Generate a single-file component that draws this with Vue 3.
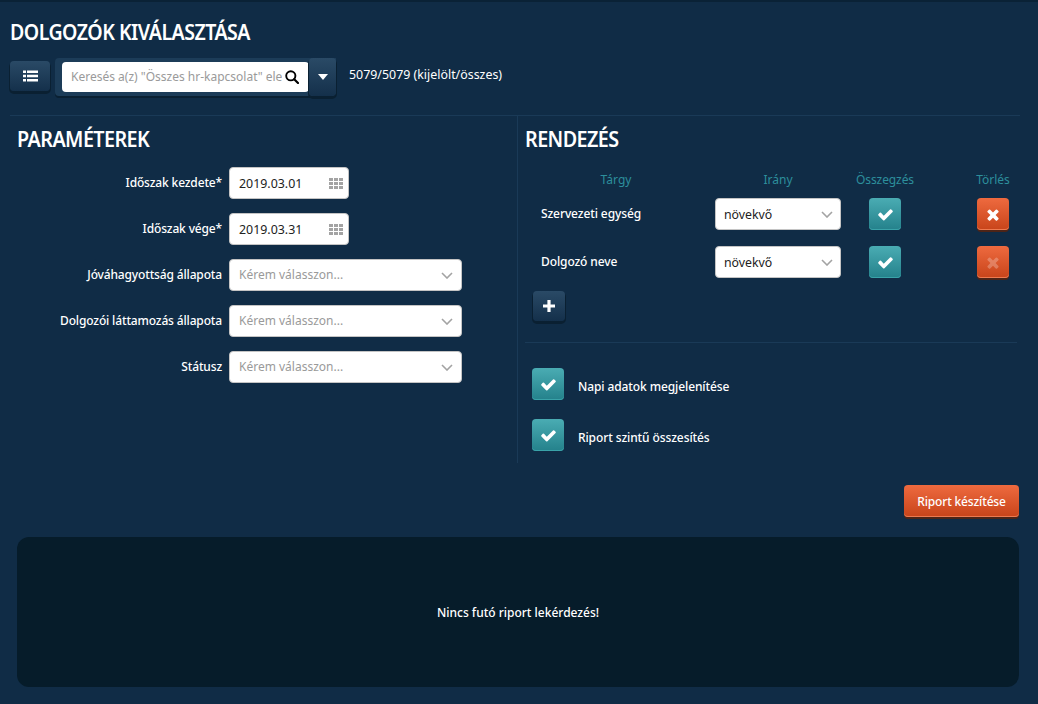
<script setup>
const params = [
  { label: 'Időszak kezdete*', value: '2019.03.01', type: 'date' },
  { label: 'Időszak vége*', value: '2019.03.31', type: 'date' },
  { label: 'Jóváhagyottság állapota', value: 'Kérem válasszon...', type: 'select' },
  { label: 'Dolgozói láttamozás állapota', value: 'Kérem válasszon...', type: 'select' },
  { label: 'Státusz', value: 'Kérem válasszon...', type: 'select' }
]
const sorts = [
  { name: 'Szervezeti egység', faded: false },
  { name: 'Dolgozó neve', faded: true }
]
const options = ['Napi adatok megjelenítése', 'Riport szintű összesítés']
const checkPath = 'M1671 566q0 40-28 68l-724 724-136 136q-28 28-68 28t-68-28l-136-136-362-362q-28-28-28-68t28-68l136-136q28-28 68-28t68 28l294 295 656-657q28-28 68-28t68 28l136 136q28 28 28 68z'
const timesPath = 'M1298 1322q0 40-28 68l-136 136q-28 28-68 28t-68-28l-294-294-294 294q-28 28-68 28t-68-28l-136-136q-28-28-28-68t28-68l294-294-294-294q-28-28-28-68t28-68l136-136q28-28 68-28t68 28l294 294 294-294q28-28 68-28t68 28l136 136q28 28 28 68t-28 68l-294 294 294 294q28 28 28 68z'
</script>

<template>
  <div class="page">
    <h1 class="title">DOLGOZÓK KIVÁLASZTÁSA</h1>
    <div class="toolbar">
      <button class="btn-dark list-btn">
        <svg width="15" height="12" viewBox="0 0 15 12"><path fill="#fff" d="M0 .5h3v2.4H0zM4 .5h11v2.4H4zM0 4.8h3v2.4H0zM4 4.8h11v2.4H4zM0 9.1h3v2.4H0zM4 9.1h11v2.4H4z"/></svg>
      </button>
      <div class="search-group">
        <div class="search-box">
          <span class="search-text">Keresés a(z) "Összes hr-kapcsolat" elemei között</span>
          <svg class="search-icon" width="14" height="14" viewBox="0 0 14 14"><circle cx="5.8" cy="5.8" r="4.6" fill="none" stroke="#000" stroke-width="1.9"/><path d="M9.2 9.2l3.8 3.8" stroke="#000" stroke-width="2.2" stroke-linecap="round"/></svg>
        </div>
        <button class="btn-dark caret-btn">
          <svg width="10" height="6" viewBox="0 0 10 6"><path fill="#fff" d="M0 0h10L5 6z"/></svg>
        </button>
      </div>
      <span class="count">5079/5079 (kijelölt/összes)</span>
    </div>

    <div class="columns">
      <section class="col-left">
        <h2 class="heading">PARAMÉTEREK</h2>
        <div class="form">
          <div v-for="p in params" :key="p.label" class="form-row">
            <label class="form-label">{{ p.label }}</label>
            <div v-if="p.type === 'date'" class="field date">
              <span class="val">{{ p.value }}</span>
              <svg width="14" height="11" viewBox="0 0 14 11"><path fill="#a3a3a3" d="M0 0h4v3H0zM5 0h4v3H5zM10 0h4v3h-4zM0 4h4v3H0zM5 4h4v3H5zM10 4h4v3h-4zM0 8h4v3H0zM5 8h4v3H5zM10 8h4v3h-4z"/></svg>
            </div>
            <div v-else class="field sel">
              <span class="ph">{{ p.value }}</span>
              <svg width="12" height="7" viewBox="0 0 12 7"><path d="M1 1l5 5 5-5" fill="none" stroke="#a3a3a3" stroke-width="1.6"/></svg>
            </div>
          </div>
        </div>
      </section>

      <section class="col-right">
        <h2 class="heading short">RENDEZÉS</h2>
        <div class="sort-head">
          <span class="th">Tárgy</span>
          <span class="th">Irány</span>
          <span class="th">Összegzés</span>
          <span class="th">Törlés</span>
        </div>
        <div class="sort-rows">
          <div v-for="s in sorts" :key="s.name" class="sort-row">
            <span class="sort-name">{{ s.name }}</span>
            <div class="field dir">
              <span class="val">növekvő</span>
              <svg width="12" height="7" viewBox="0 0 12 7"><path d="M1 1l5 5 5-5" fill="none" stroke="#a3a3a3" stroke-width="1.6"/></svg>
            </div>
            <button class="sq teal">
              <svg width="17" height="17" viewBox="0 0 1792 1792"><path fill="#fff" :d="checkPath"/></svg>
            </button>
            <button class="sq orange">
              <svg width="14" height="17" viewBox="0 0 1408 1792" :class="{ faded: s.faded }"><path fill="#fff" :d="timesPath"/></svg>
            </button>
          </div>
        </div>
        <button class="btn-dark plus-btn">
          <svg width="12" height="12" viewBox="0 0 12 12"><path fill="#fff" d="M4.4 0h3.2v4.4H12v3.2H7.6V12H4.4V7.6H0V4.4h4.4z"/></svg>
        </button>
        <div class="divider"></div>
        <div class="options">
          <div v-for="o in options" :key="o" class="option">
            <button class="sq teal">
              <svg width="17" height="17" viewBox="0 0 1792 1792"><path fill="#fff" :d="checkPath"/></svg>
            </button>
            <span class="option-text">{{ o }}</span>
          </div>
        </div>
      </section>
    </div>

    <div class="actions">
      <button class="run-btn">Riport készítése</button>
    </div>
    <div class="result">Nincs futó riport lekérdezés!</div>
  </div>
</template>

<style scoped>
.page {
  box-sizing: border-box;
  width: 1038px;
  height: 704px;
  overflow: hidden;
  background: #102c46;
  border-top: 2px solid #0a2236;
  padding: 0 18px 0 10px;
  color: #fff;
  font-family: "Noto Sans", "Open Sans", sans-serif;
  font-size: 12px;
}
button {
  padding: 0;
  font: inherit;
  color: #fff;
  cursor: pointer;
  display: flex;
  align-items: center;
  justify-content: center;
}
.title {
  margin: 16px 0 0;
  height: 26px;
  line-height: 26px;
  font-size: 22px;
  font-weight: 600;
  letter-spacing: -0.6px;
  white-space: nowrap;
  transform: scaleX(0.89);
  transform-origin: left center;
}
.toolbar {
  display: flex;
  align-items: center;
  margin-top: 14px;
  height: 38px;
}
.btn-dark {
  border: 0;
  border-radius: 4px;
  background: linear-gradient(#2a4a66, #14304b);
  box-shadow: 0 2px 0 1px #0a2032;
}
.list-btn {
  width: 40px;
  height: 30px;
  margin-top: -3px;
}
.search-group {
  display: flex;
  align-items: flex-start;
  width: 281px;
  height: 38px;
  margin-left: 5px;
  background: #1c3c58;
  border-radius: 4px 0 4px 4px;
  box-shadow: 0 2px 0 0 #0a2032;
}
.search-box {
  box-sizing: border-box;
  width: 247px;
  height: 30px;
  margin: 4px 0 0 7px;
  background: #fff;
  border-radius: 4px;
  display: flex;
  align-items: center;
  padding: 0 10px 0 9px;
  gap: 3px;
}
.search-text {
  flex: 1;
  overflow: hidden;
  white-space: nowrap;
  color: #9a9a9a;
  margin-top: -1px;
}
.search-icon { flex: none; }
.caret-btn {
  width: 27px;
  height: 38px;
}
.count {
  margin-left: 13px;
  margin-top: -5px;
  font-size: 12.4px;
}
.columns {
  display: flex;
  margin-top: 19px;
  height: 347px;
  border-top: 1px solid #1a3a57;
}
.col-left {
  box-sizing: border-box;
  width: 507px;
  padding-left: 7px;
}
.col-right {
  box-sizing: border-box;
  width: 503px;
  padding-left: 8px;
  border-left: 1px solid #1a3a57;
}
.heading {
  margin: 10px 0 0;
  height: 27px;
  line-height: 27px;
  font-size: 21px;
  font-weight: 600;
  letter-spacing: -0.6px;
  white-space: nowrap;
  transform: scaleX(0.94);
  transform-origin: left center;
}
.heading.short { margin-left: -1px; }
.form {
  display: flex;
  flex-direction: column;
  gap: 14px;
  margin-top: 14px;
}
.form-row {
  display: flex;
  align-items: center;
  gap: 7px;
}
.form-label {
  width: 205px;
  text-align: right;
  white-space: nowrap;
  font-weight: 500;
  letter-spacing: -0.15px;
  margin-top: -2px;
}
.field {
  box-sizing: border-box;
  height: 32px;
  background: #fff;
  border: 1px solid #c4c4c4;
  border-radius: 4px;
  display: flex;
  align-items: center;
  justify-content: space-between;
  color: #222;
}
.date { width: 120px; padding: 0 5px 0 9px; font-size: 12.4px; }
.sel { width: 233px; padding: 0 8px 0 9px; }
.ph { color: #9a9a9a; margin-top: -1px; }
.val { color: #222; }
.sort-head,
.sort-row {
  display: grid;
  grid-template-columns: 180px 144px 70px 38px 70px;
  justify-items: center;
  align-items: center;
}
.sort-head {
  height: 20px;
  margin-top: 17px;
  margin-bottom: 8px;
}
.sort-rows {
  display: flex;
  flex-direction: column;
  gap: 16px;
}
.th {
  color: #2d8f9c;
  line-height: 16px;
}
.th:nth-child(3) { letter-spacing: -0.1px; }
.th:nth-child(4) { grid-column: 5; }
.sort-name {
  justify-self: start;
  margin-left: 15px;
  margin-top: -2px;
  font-weight: 500;
  letter-spacing: -0.1px;
}
.dir { width: 126px; padding: 0 7px 0 8px; font-size: 12.3px; }
.sq {
  width: 32px;
  height: 32px;
  border: 0;
  border-radius: 4px;
}
.teal {
  background: linear-gradient(#4aacb3, #24818b);
  box-shadow: inset 0 -1px 0 #3aa3a9;
}
.orange {
  background: linear-gradient(#ee6a3f, #c8441a);
  box-shadow: inset 0 -1px 0 #ee7a50, 0 2px 0 #4d2417;
  grid-column: 5;
}
.faded { opacity: 0.25; }
.plus-btn {
  width: 32px;
  height: 30px;
  margin: 13px 0 0 7px;
}
.divider {
  height: 1px;
  width: 492px;
  background: #1a3a57;
  margin: 21px 0 0 -1px;
}
.options {
  display: flex;
  flex-direction: column;
  gap: 19px;
  margin: 25px 0 0 6px;
}
.option {
  display: flex;
  align-items: center;
  gap: 14px;
  font-weight: 500;
  letter-spacing: -0.1px;
}
.option-text { padding-top: 4px; }
.actions {
  display: flex;
  justify-content: flex-end;
  margin-top: 22px;
  padding-right: 1px;
}
.run-btn {
  box-sizing: border-box;
  width: 115px;
  height: 32px;
  border: 0;
  border-radius: 4px;
  background: linear-gradient(#ee6a3f, #c8441a);
  box-shadow: inset 0 -1px 0 #ee7a50, 0 2px 0 #4d2417;
  font-size: 12px;
  font-weight: 500;
  letter-spacing: -0.15px;
}
.result {
  margin: 20px 0 0 7px;
  width: 1002px;
  height: 150px;
  background: #061c2a;
  border-radius: 12px;
  display: flex;
  align-items: center;
  justify-content: center;
  font-weight: 500;
}
</style>
